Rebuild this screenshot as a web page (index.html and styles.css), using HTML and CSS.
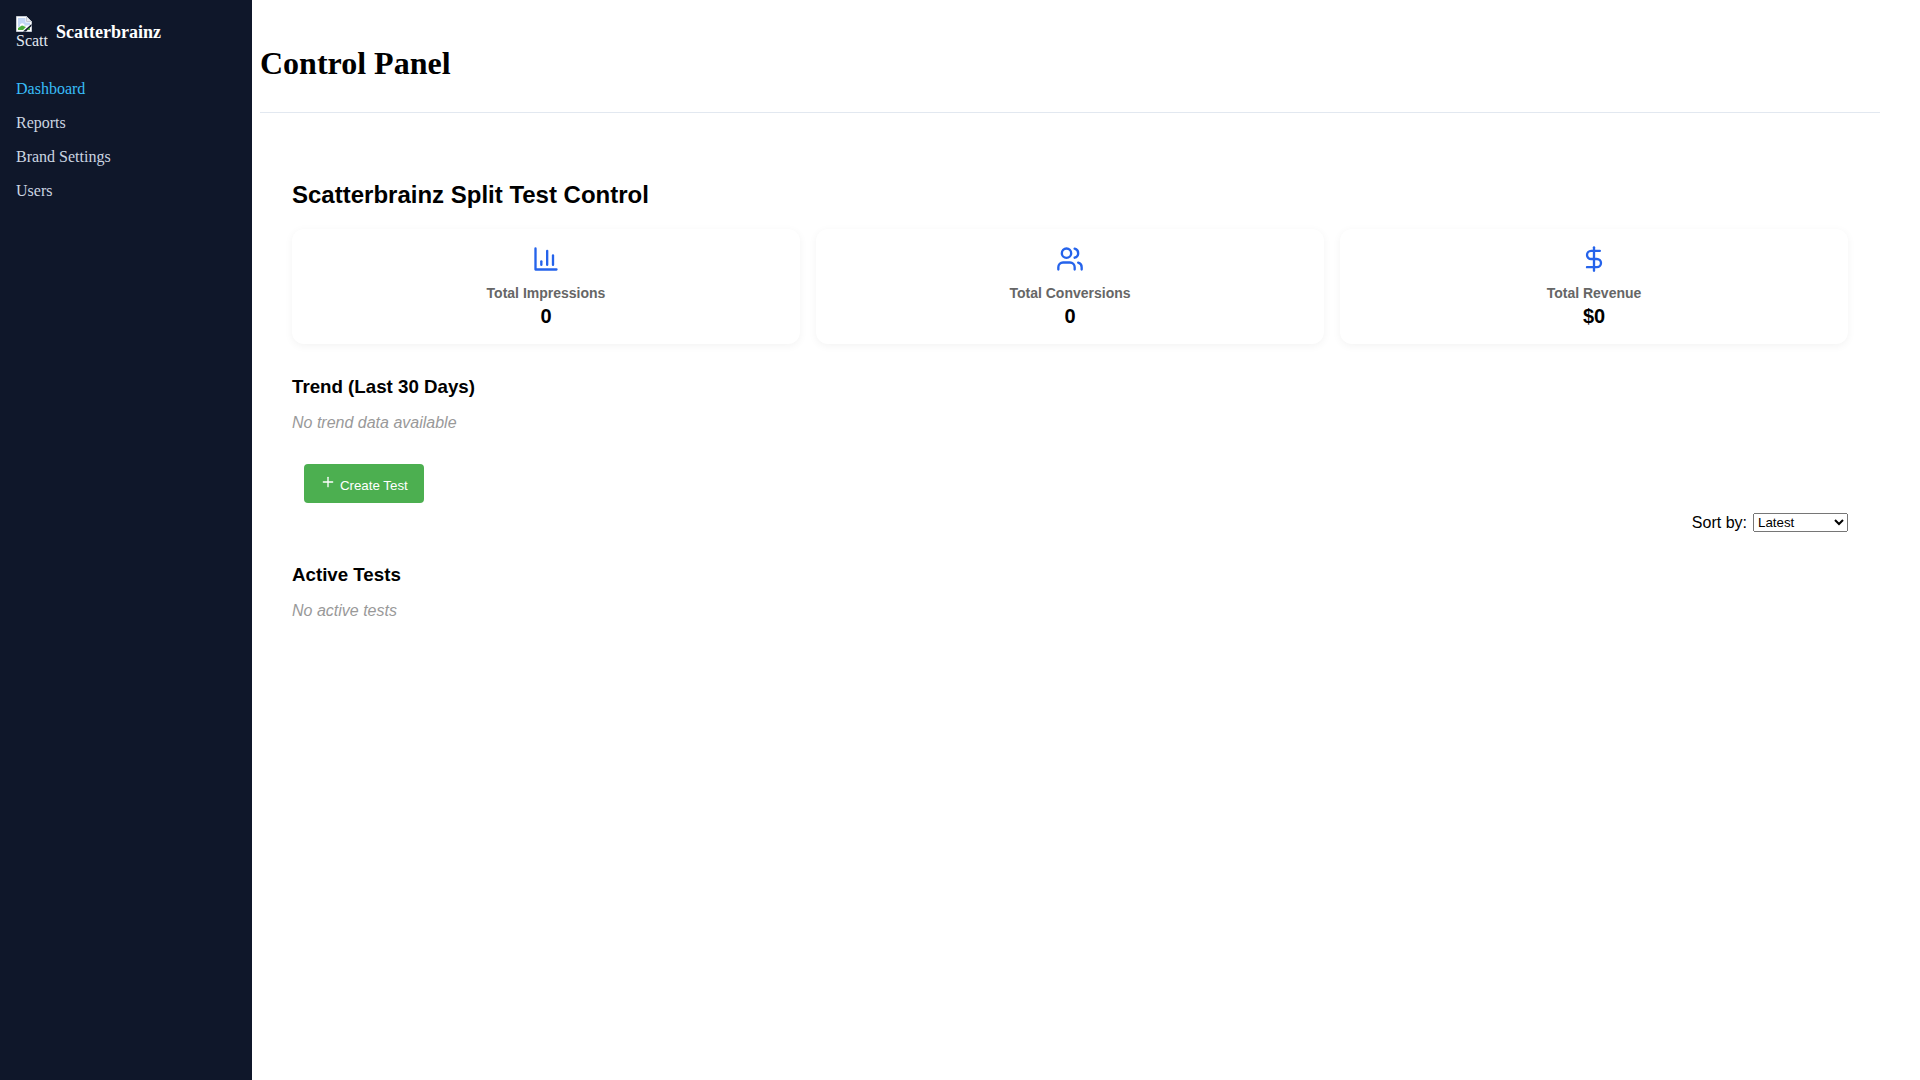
FILE: index.html
```html
<!DOCTYPE html>
<html lang="en">
<head>
  <meta charset="UTF-8" />
  <meta name="viewport" content="width=device-width, initial-scale=1.0" />
  <title>Scatterbrainz Control Panel</title>
  <link rel="stylesheet" href="styles.css">
</head>
<body>
  <aside class="sidebar">
    <div class="brand">
      <div class="brand-logo">
        <svg class="broken-img" viewBox="0 0 16 16" width="16" height="16">
          <path d="M0.5 0.5H10.5L15.5 5.5V15.5H0.5Z" fill="#fff" stroke="#c4cad3" />
          <path d="M10.5 0.5V5.5H15.5Z" fill="#e4e8ee" stroke="#c4cad3" />
          <path d="M2 2H9.5V6.5H14V9L2 11Z" fill="#c3d7f5" />
          <path d="M4 8.5Q6 6.5 8 8L9 9.5L4 10Z" fill="#fff" />
          <path d="M2 12L6 9.5L10 11L7 14H2Z" fill="#4caf3c" />
          <path d="M7 15.5L15.5 8V10L10 15.5Z" fill="#0f172a" />
          <path d="M11 14L14 11.5V14Z" fill="#4caf3c" />
        </svg>
        <span class="brand-alt">Scatt</span>
      </div>
      <span class="brand-name">Scatterbrainz</span>
    </div>
    <nav class="side-nav">
      <a class="active" href="#">Dashboard</a>
      <a href="#">Reports</a>
      <a href="#">Brand Settings</a>
      <a href="#">Users</a>
    </nav>
  </aside>

  <div class="main">
    <header class="page-header">
      <h1>Control Panel</h1>
    </header>

    <main class="content">
      <h2>Scatterbrainz Split Test Control</h2>

      <section class="stats">
        <div class="stat-card">
          <svg class="stat-icon" viewBox="0 0 24 24"><path d="M3 3v18h18" /><path d="M18 17V9" /><path d="M13 17V5" /><path d="M8 17v-3" /></svg>
          <div class="stat-label">Total Impressions</div>
          <div class="stat-value">0</div>
        </div>
        <div class="stat-card">
          <svg class="stat-icon" viewBox="0 0 24 24"><path d="M16 21v-2a4 4 0 0 0-4-4H6a4 4 0 0 0-4 4v2" /><circle cx="9" cy="7" r="4" /><path d="M22 21v-2a4 4 0 0 0-3-3.87" /><path d="M16 3.13a4 4 0 0 1 0 7.75" /></svg>
          <div class="stat-label">Total Conversions</div>
          <div class="stat-value">0</div>
        </div>
        <div class="stat-card">
          <svg class="stat-icon" viewBox="0 0 24 24"><path d="M12 2v20" /><path d="M17 5H9.5a3.5 3.5 0 0 0 0 7h5a3.5 3.5 0 0 1 0 7H6" /></svg>
          <div class="stat-label">Total Revenue</div>
          <div class="stat-value">$0</div>
        </div>
      </section>

      <h3 class="trend-title">Trend (Last 30 Days)</h3>
      <p class="empty">No trend data available</p>

      <button class="create-btn">
        <svg class="plus" viewBox="0 0 24 24"><path d="M5 12h14" /><path d="M12 5v14" /></svg>
        Create Test
      </button>

      <div class="sort-row">
        <label for="sort">Sort by:</label>
        <select id="sort">
          <option>Latest</option>
          <option>Oldest</option>
        </select>
      </div>

      <h3 class="active-title">Active Tests</h3>
      <p class="empty">No active tests</p>
    </main>
  </div>
</body>
</html>
```

FILE: styles.css
```css
* {
  box-sizing: border-box;
}

body {
  margin: 0;
  min-height: 100vh;
  display: flex;
  background: #fff;
  color: #000;
  font-family: "Liberation Serif", serif;
}

/* Sidebar */
.sidebar {
  width: 252px;
  flex-shrink: 0;
  background-color: #0f172a;
  color: #fff;
  padding: 16px;
}

.brand {
  display: flex;
  align-items: center;
  gap: 8px;
  margin-bottom: 32px;
}

.brand-logo {
  width: 32px;
  height: 32px;
  overflow: hidden;
  font-size: 16px;
  line-height: 18px;
  white-space: nowrap;
  color: #e2e8f0;
}

.broken-img {
  display: block;
}

.brand-alt {
  display: block;
}

.brand-name {
  font-size: 18px;
  font-weight: bold;
}

.side-nav {
  display: flex;
  flex-direction: column;
  gap: 16px;
}

.side-nav a {
  font-size: 16px;
  line-height: 18px;
  color: #cbd5e1;
  text-decoration: none;
}

.side-nav a.active {
  color: #38bdf8;
}

/* Main area */
.main {
  flex: 1;
  padding: 0 40px 0 8px;
}

.page-header {
  border-bottom: 1px solid #e2e8f0;
  height: 113px;
  padding-top: 45px;
}

.page-header h1 {
  margin: 0;
  font-size: 32px;
  line-height: 37px;
}

.content {
  padding: 32px;
  font-family: "Liberation Sans", sans-serif;
}

.content h2 {
  margin: 33px 0 17px;
  font-size: 24px;
  line-height: 34px;
}

.stats {
  display: grid;
  grid-template-columns: repeat(3, 1fr);
  gap: 16px;
}

.stat-card {
  height: 115px;
  padding: 16px;
  border-radius: 12px;
  background: #fff;
  box-shadow: 0 2px 8px rgba(0, 0, 0, 0.05);
  text-align: center;
}

.stat-icon {
  display: block;
  width: 28px;
  height: 28px;
  margin: 0 auto 12px;
  fill: none;
  stroke: #2563eb;
  stroke-width: 2;
  stroke-linecap: round;
  stroke-linejoin: round;
}

.stat-label {
  font-size: 14px;
  line-height: 16px;
  font-weight: bold;
  color: #666;
}

.stat-value {
  margin-top: 4px;
  font-size: 20px;
  line-height: 23px;
  font-weight: bold;
}

.content h3 {
  font-size: 18.72px;
  line-height: 23px;
}

.trend-title {
  margin: 31px 0 14px;
}

.active-title {
  margin: 31px 0 14px;
}

.empty {
  margin: 0;
  font-size: 16px;
  line-height: 22px;
  font-style: italic;
  color: #999;
}

.create-btn {
  display: block;
  margin: 30px 0 0 12px;
  width: 120px;
  height: 39px;
  border: none;
  border-radius: 4px;
  background-color: #4caf50;
  color: #fff;
  font-family: "Liberation Sans", sans-serif;
  font-size: 13.33px;
  cursor: pointer;
}

.plus {
  width: 16px;
  height: 16px;
  fill: none;
  stroke: #fff;
  stroke-width: 2;
  stroke-linecap: round;
}

.sort-row {
  display: flex;
  justify-content: flex-end;
  align-items: center;
  gap: 6px;
  margin-top: 10px;
  font-size: 16px;
}

.sort-row select {
  width: 95px;
  font-family: "Liberation Sans", sans-serif;
  font-size: 13.33px;
}
```
